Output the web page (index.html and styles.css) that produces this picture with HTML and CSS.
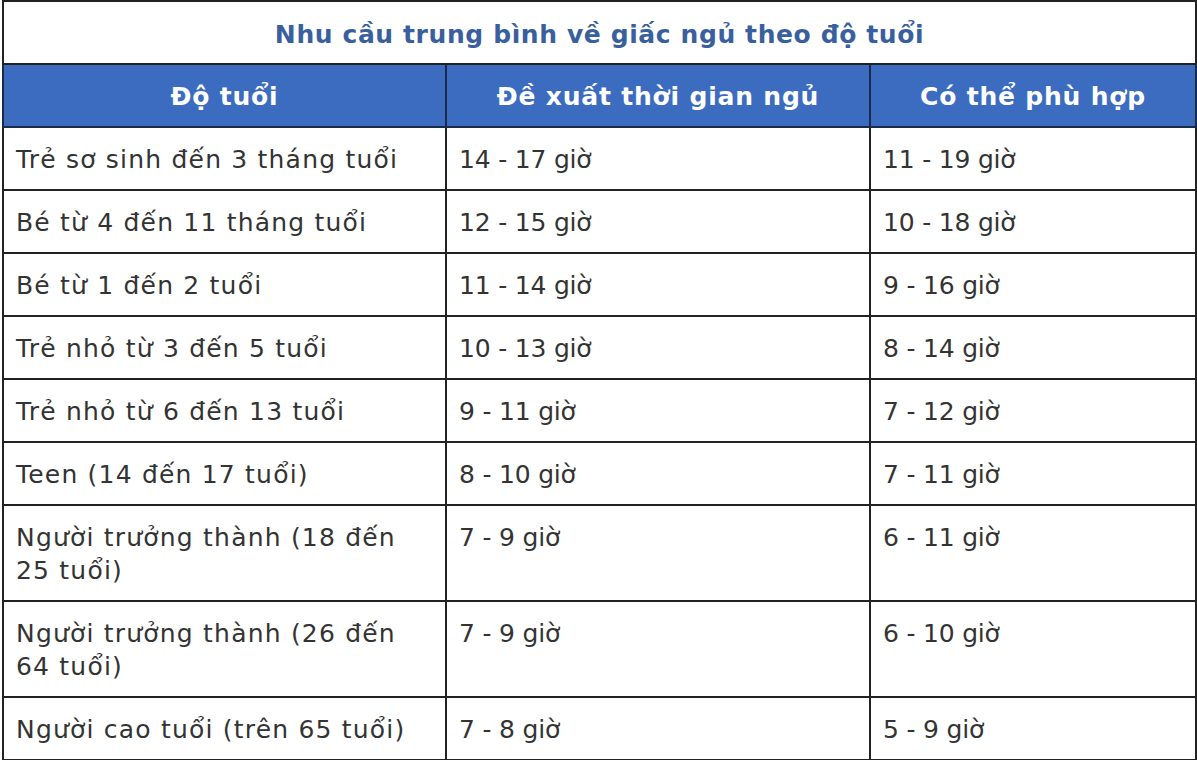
FILE: index.html
```html
<!DOCTYPE html>
<html lang="vi">
<head>
<meta charset="utf-8">
<link rel="stylesheet" href="styles.css">
</head>
<body>
<table class="sleep">
  <colgroup>
    <col class="c1"><col class="c2"><col class="c3">
  </colgroup>
  <thead>
    <tr><th class="title" colspan="3">Nhu cầu trung bình về giấc ngủ theo độ tuổi</th></tr>
    <tr class="head"><th>Độ tuổi</th><th>Đề xuất thời gian ngủ</th><th>Có thể phù hợp</th></tr>
  </thead>
  <tbody>
    <tr><td class="age">Trẻ sơ sinh đến 3 tháng tuổi</td><td>14 - 17 giờ</td><td>11 - 19 giờ</td></tr>
    <tr><td class="age">Bé từ 4 đến 11 tháng tuổi</td><td>12 - 15 giờ</td><td>10 - 18 giờ</td></tr>
    <tr><td class="age">Bé từ 1 đến 2 tuổi</td><td>11 - 14 giờ</td><td>9 - 16 giờ</td></tr>
    <tr><td class="age">Trẻ nhỏ từ 3 đến 5 tuổi</td><td>10 - 13 giờ</td><td>8 - 14 giờ</td></tr>
    <tr><td class="age">Trẻ nhỏ từ 6 đến 13 tuổi</td><td>9 - 11 giờ</td><td>7 - 12 giờ</td></tr>
    <tr><td class="age">Teen (14 đến 17 tuổi)</td><td>8 - 10 giờ</td><td>7 - 11 giờ</td></tr>
    <tr><td class="age">Người trưởng thành (18 đến 25 tuổi)</td><td>7 - 9 giờ</td><td>6 - 11 giờ</td></tr>
    <tr><td class="age">Người trưởng thành (26 đến 64 tuổi)</td><td>7 - 9 giờ</td><td>6 - 10 giờ</td></tr>
    <tr><td class="age">Người cao tuổi (trên 65 tuổi)</td><td>7 - 8 giờ</td><td>5 - 9 giờ</td></tr>
  </tbody>
</table>
</body>
</html>
```

FILE: styles.css
```css
html, body {
  margin: 0;
  padding: 0;
  background: #ffffff;
}

body {
  padding: 0 2px 0 2px;
  font-family: "DejaVu Sans", Inter, "Liberation Sans", sans-serif;
  color: #333333;
}

.sleep {
  width: 1193px;
  border-collapse: collapse;
  table-layout: fixed;
  border: 2px solid #222222;
}

.c1 { width: 443px; }
.c2 { width: 424px; }
.c3 { width: 326px; }

.sleep th,
.sleep td {
  border: 2px solid #222222;
  vertical-align: top;
}

.title {
  height: 58px;
  padding: 3px 0 0 0;
  vertical-align: middle !important;
  text-align: center;
  font-size: 25px;
  font-weight: 700;
  letter-spacing: 0.6px;
  color: #3a5f9f;
  background: #ffffff;
}

.head th {
  height: 59px;
  padding: 2px 0 0 0;
  vertical-align: middle;
  text-align: center;
  background: #3b6cbf;
  color: #ffffff;
  font-size: 25px;
  font-weight: 700;
  letter-spacing: 0.8px;
  border-color: #1a2a4a;
}

.sleep td {
  padding: 15px 14px 13px 12px;
  font-size: 25px;
  line-height: 33px;
  font-weight: 400;
  letter-spacing: -0.2px;
}

.sleep td.age {
  letter-spacing: 1.2px;
}
```
